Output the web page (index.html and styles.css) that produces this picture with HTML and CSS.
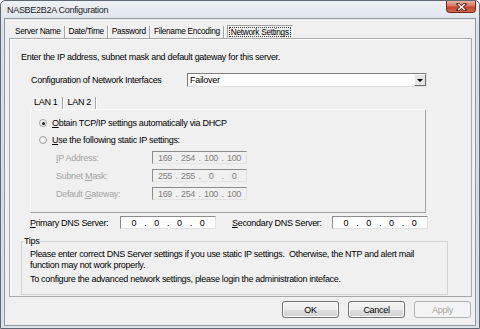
FILE: index.html
```html
<!DOCTYPE html>
<html>
<head>
<meta charset="utf-8">
<link rel="stylesheet" href="styles.css">
</head>
<body>
<div class="window">
  <div class="titlebar">
    <span class="title">NASBE2B2A Configuration</span>
    <div class="close">
      <svg width="11" height="8" viewBox="0 0 11 8"><path d="M2 1 L9 7 M9 1 L2 7" stroke="#5a1e14" stroke-width="3" stroke-linecap="square"/><path d="M2 1 L9 7 M9 1 L2 7" stroke="#fff" stroke-width="1.6"/></svg>
    </div>
  </div>
  <div class="client">
    <div class="tabs">
      <span class="tab">Server Name</span><span class="sep"></span>
      <span class="tab">Date/Time</span><span class="sep"></span>
      <span class="tab">Password</span><span class="sep"></span>
      <span class="tab">Filename Encoding</span><span class="sep"></span>
      <span class="tab active"><span class="focus">Network Settings</span></span>
    </div>
    <div class="panel">
      <p class="intro">Enter the IP address, subnet mask and default gateway for this server.</p>
      <div class="cfg-row">
        <span class="cfg-label">Configuration of Network Interfaces</span>
        <div class="select"><span>Failover</span><span class="arrow"></span></div>
      </div>
      <div class="subtabs">
        <span class="tab">LAN 1</span><span class="sep"></span>
        <span class="tab">LAN 2</span><span class="sep"></span>
      </div>
      <div class="subpanel">
        <div class="radio-row"><span class="radio checked"></span><span><u>O</u>btain TCP/IP settings automatically via DHCP</span></div>
        <div class="radio-row second"><span class="radio"></span><span><u>U</u>se the following static IP settings:</span></div>
        <div class="ipgrid">
          <span class="iplabel"><u>I</u>P Address:</span>
          <div class="ipf disabled"><span class="oct">169</span><span class="dot">.</span><span class="oct">254</span><span class="dot">.</span><span class="oct">100</span><span class="dot">.</span><span class="oct">100</span></div>
          <span class="iplabel">Subnet <u>M</u>ask:</span>
          <div class="ipf disabled"><span class="oct">255</span><span class="dot">.</span><span class="oct">255</span><span class="dot">.</span><span class="oct">0</span><span class="dot">.</span><span class="oct">0</span></div>
          <span class="iplabel">Default <u>G</u>ateway:</span>
          <div class="ipf disabled"><span class="oct">169</span><span class="dot">.</span><span class="oct">254</span><span class="dot">.</span><span class="oct">100</span><span class="dot">.</span><span class="oct">100</span></div>
        </div>
      </div>
      <div class="dns-row">
        <span class="dns-label"><u>P</u>rimary DNS Server:</span>
        <div class="ipf dns"><span class="oct">0</span><span class="dot">.</span><span class="oct">0</span><span class="dot">.</span><span class="oct">0</span><span class="dot">.</span><span class="oct">0</span></div>
        <span class="dns-label second"><u>S</u>econdary DNS Server:</span>
        <div class="ipf dns"><span class="oct">0</span><span class="dot">.</span><span class="oct">0</span><span class="dot">.</span><span class="oct">0</span><span class="dot">.</span><span class="oct">0</span></div>
      </div>
      <fieldset class="tips">
        <legend>Tips</legend>
        <p>Please enter correct DNS Server settings if you use static IP settings.&nbsp; Otherwise, the NTP and alert mail<br>function may not work properly.</p>
        <p class="p2">To configure the advanced network settings, please login the administration inteface.</p>
      </fieldset>
    </div>
    <div class="buttons">
      <span class="btn">OK</span>
      <span class="btn">Cancel</span>
      <span class="btn off">Apply</span>
    </div>
  </div>
</div>
</body>
</html>
```

FILE: styles.css
```css
* { box-sizing: border-box; }
html, body { margin: 0; padding: 0; }
body {
  width: 480px;
  height: 329px;
  overflow: hidden;
  background: #fff;
  font-family: "Liberation Sans", Arial, sans-serif;
  font-size: 9px;
  letter-spacing: -0.3px;
  color: #000;
  white-space: nowrap;
}
u { text-decoration: underline; text-underline-offset: 1px; }

.window {
  width: 480px;
  height: 329px;
  border: 1px solid #5f6872;
  border-radius: 5px 5px 0 0;
  background: linear-gradient(#eef1f5, #d9e0e8 8%, #d4dbe3 60%, #dce2e8);
  padding: 0 3px 2px 3px;
  display: flex;
  flex-direction: column;
}
.titlebar {
  height: 17px;
  display: flex;
  align-items: center;
}
.title {
  padding-left: 3px;
  font-size: 9px;
  color: #1b1b1b;
}
.close {
  margin-left: auto;
  align-self: flex-start;
  width: 30px;
  height: 12px;
  border: 1px solid #6e2a1c;
  border-top: none;
  border-radius: 0 0 4px 4px;
  background: linear-gradient(#eab3a4, #d9735c 45%, #c6432a 55%, #d2674c);
  display: flex;
  align-items: center;
  justify-content: center;
}
.close svg { display: block; }

.client {
  flex: 1;
  border: 1px solid #8d98a4;
  background: #f0f0f0;
  padding: 6px 3px 0 4px;
  display: flex;
  flex-direction: column;
}

.tabs {
  display: flex;
  height: 13px;
  padding-left: 5px;
  font-size: 8.3px;
}
.tab {
  padding: 0 1px;
  line-height: 12px;
}
.sep {
  width: 2px;
  border-left: 1px solid #a6a6a6;
  border-right: 1px solid #fff;
  margin: 1px 2px 0 2px;
}
.tab.active {
  border: 1px solid;
  border-color: #a0a0a0 #fdfdfd #f0f0f0 #a0a0a0;
  padding: 1px 1px 0 1px;
  margin-left: 0;
}
.focus {
  display: block;
  outline: 1px dotted #444;
  outline-offset: -1px;
  line-height: 10px;
  padding: 0 2px;
}

.panel {
  height: 259px;
  border: 1px solid #a9a9a9;
  box-shadow: inset 1px 1px 0 #fff;
  display: flex;
  flex-direction: column;
}
.intro {
  margin: 12px 0 0 11px;
  line-height: 12px;
}
.cfg-row {
  display: flex;
  align-items: center;
  margin-top: 10px;
  padding-left: 21px;
  height: 14px;
}
.cfg-label { width: 156px; }
.select {
  width: 240px;
  height: 14px;
  border: 1px solid;
  border-color: #7d7d7d #e3e3e3 #e3e3e3 #7d7d7d;
  background: #fff;
  display: flex;
  align-items: center;
  padding-left: 2px;
}
.arrow {
  margin-left: auto;
  width: 12px;
  height: 12px;
  border: 1px solid;
  border-color: #f8f8f8 #6d6d6d #6d6d6d #f8f8f8;
  background: #e4e4e4;
  display: flex;
  align-items: center;
  justify-content: center;
}
.arrow::after {
  content: "";
  border-top: 3px solid #000;
  border-left: 3px solid transparent;
  border-right: 3px solid transparent;
  margin-top: 1px;
}

.subtabs {
  display: flex;
  height: 13px;
  margin: 9px 0 0 22px;
}
.subtabs .tab { padding: 0 2px; line-height: 13px; }
.subtabs .sep { margin: 1px 2px 0 2px; }
.subpanel {
  margin-left: 20px;
  width: 396px;
  height: 104px;
  border: 1px solid;
  border-color: #fbfbfb #a3a3a3 #a3a3a3 #fbfbfb;
  padding: 7px 0 0 8px;
  display: flex;
  flex-direction: column;
}
.radio-row {
  display: flex;
  align-items: center;
  height: 12px;
  gap: 5px;
}
.radio-row.second { margin-top: 5px; }
.radio {
  width: 8px;
  height: 8px;
  border-radius: 50%;
  border: 1px solid #a0a0a0;
  background: radial-gradient(#ffffff, #e6e6e6);
  display: flex;
  align-items: center;
  justify-content: center;
}
.radio.checked::after {
  content: "";
  width: 3px;
  height: 3px;
  border-radius: 50%;
  background: #1a1a1a;
}
.ipgrid {
  display: grid;
  grid-template-columns: 96px 95px;
  grid-auto-rows: 13px;
  row-gap: 5px;
  margin: 5px 0 0 17px;
  align-items: center;
}
.iplabel { color: #a3a3a3; }
.ipf {
  height: 13px;
  border: 1px solid;
  border-color: #8c8c8c #e2e2e2 #e2e2e2 #8c8c8c;
  display: flex;
  align-items: center;
  padding: 0 3px;
}
.ipf.disabled {
  width: 95px;
  background: #f0f0f0;
  color: #7e7e7e;
}
.oct { width: 18px; text-align: center; }
.dot { width: 5px; text-align: center; }
.ipf.dns {
  width: 96px;
  background: #fff;
  color: #000;
  padding: 0 4px;
}

.dns-row {
  display: flex;
  align-items: center;
  margin-top: 3px;
  height: 13px;
  padding-left: 20px;
}
.dns-label { width: 90px; }
.dns-label.second { width: 100px; margin-left: 16px; }

.tips {
  margin: 6px 0 0 11px;
  width: 427px;
  height: 60px;
  border: 1px solid #d2d2d2;
  padding: 0 0 0 8px;
  min-width: 0;
}
.tips legend {
  padding: 0 1px;
  margin-left: -7px;
  line-height: 12px;
}
.tips p {
  margin: 2px 0 0 0;
  line-height: 11px;
}
.tips p.p2 { margin-top: 3px; }

.buttons {
  display: flex;
  justify-content: flex-end;
  gap: 9px;
  margin-top: 4px;
  padding-right: 1px;
}
.btn {
  width: 57px;
  height: 17px;
  border: 1px solid #707070;
  border-radius: 3px;
  background: linear-gradient(#f4f4f4, #ececec 50%, #dedede 51%, #d2d2d2);
  box-shadow: inset 0 0 0 1px #fbfbfb;
  display: flex;
  align-items: center;
  justify-content: center;
}
.btn.off {
  border-color: #adb2b5;
  background: #f4f4f4;
  color: #a6a6a6;
  box-shadow: none;
}
```
